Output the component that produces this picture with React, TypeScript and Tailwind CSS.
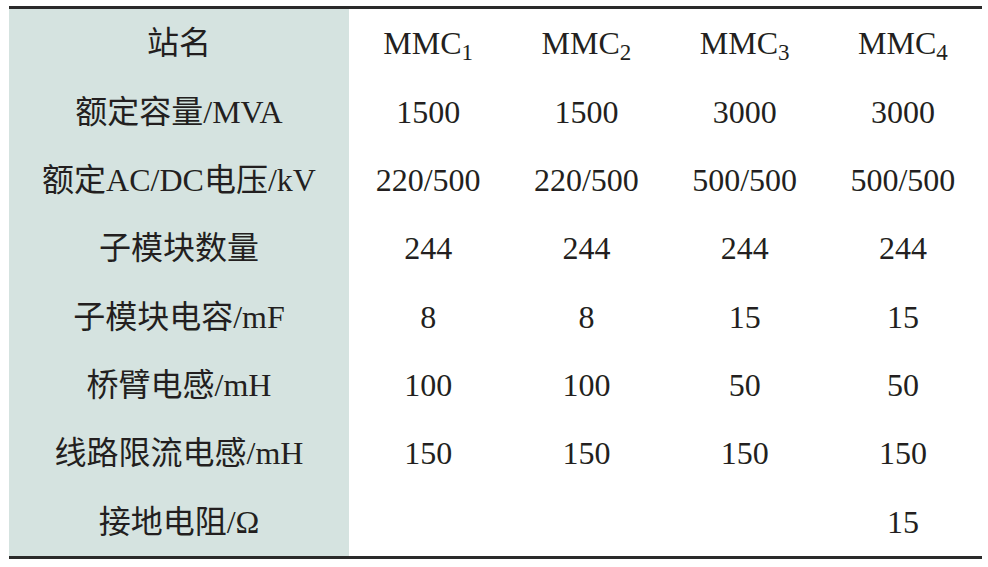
import React from 'react'

type Row = { label: React.ReactNode; values: React.ReactNode[] }

const Mmc = ({ n }: { n: number }) => (
  <span>
    MMC<span className="relative top-[6px] text-[23px]">{n}</span>
  </span>
)

const rows: Row[] = [
  { label: '站名', values: [1, 2, 3, 4].map((n) => <Mmc key={n} n={n} />) },
  { label: '额定容量/MVA', values: ['1500', '1500', '3000', '3000'] },
  { label: '额定AC/DC电压/kV', values: ['220/500', '220/500', '500/500', '500/500'] },
  { label: '子模块数量', values: ['244', '244', '244', '244'] },
  { label: '子模块电容/mF', values: ['8', '8', '15', '15'] },
  { label: '桥臂电感/mH', values: ['100', '100', '50', '50'] },
  { label: '线路限流电感/mH', values: ['150', '150', '150', '150'] },
  { label: '接地电阻/Ω', values: ['', '', '', '15'] },
]

export default function App() {
  return (
    <div
      className="h-[567px] w-[988px] bg-white pt-[6px] pl-[9px] text-[32px] text-[#231f20]"
      style={{ fontFamily: '"Liberation Serif", "Noto Sans CJK SC", serif' }}
    >
      <div className="w-[973px] border-y-[3px] border-[#2a2a2a]">
        <div className="grid h-[547px] grid-cols-[340px_1fr_1fr_1fr_1fr] grid-rows-8">
          {rows.map((row, i) => (
            <React.Fragment key={i}>
              <div className="flex items-center justify-center bg-[#d5e3e0] leading-none">
                {row.label}
              </div>
              {row.values.map((v, j) => (
                <div key={j} className="flex items-center justify-center leading-none">
                  {v}
                </div>
              ))}
            </React.Fragment>
          ))}
        </div>
      </div>
    </div>
  )
}
